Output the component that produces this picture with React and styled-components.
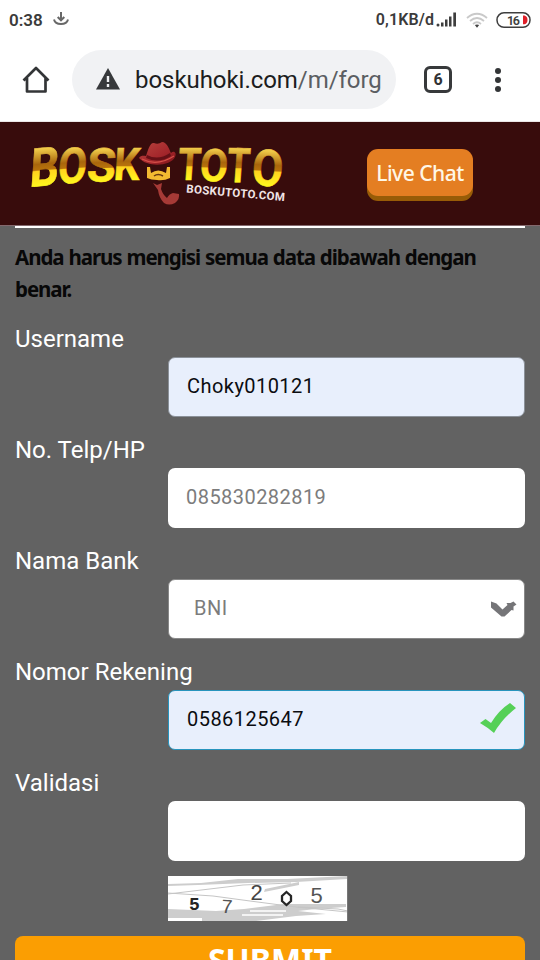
import React from 'react';
import styled, { createGlobalStyle } from 'styled-components';

const GlobalStyle = createGlobalStyle`
  * {
    box-sizing: border-box;
  }

  body {
    margin: 0;
    background: #626262;
    font-family: Roboto, "Liberation Sans", sans-serif;
  }
`;

const Screen = styled.div`
  width: 540px;
  height: 960px;
  display: flex;
  flex-direction: column;
  overflow: hidden;
  background: #626262;
`;

const StatusBar = styled.div`
  flex: none;
  height: 40px;
  padding: 0 9px;
  display: flex;
  align-items: center;
  justify-content: space-between;
  background: #fff;
  color: #3b3b3b;
  font-size: 17px;
  font-weight: 600;
`;

const StatusGroup = styled.div`
  display: flex;
  align-items: center;
  gap: ${(props) => props.gap};
`;

const StatusText = styled.span`
  font-size: ${(props) => props.size};
  letter-spacing: ${(props) => props.spacing || 0};
  line-height: 20px;
`;

const BrowserBar = styled.div`
  flex: none;
  height: 82px;
  padding: 10px 32px 13px 21px;
  display: flex;
  align-items: center;
  background: #fff;
  border-bottom: 1px solid #ece6e6;
`;

const AddressBar = styled.div`
  width: 324px;
  height: 59px;
  margin-left: 21px;
  padding: 2px 12px 0 23px;
  display: flex;
  align-items: center;
  gap: 14px;
  border-radius: 30px;
  background: #f1f2f4;

  svg {
    flex: none;
  }
`;

const Address = styled.span`
  color: #1c1d20;
  font-size: 24px;
  letter-spacing: ${(props) => props.spacing};
  white-space: nowrap;

  em {
    color: #5b5e62;
    font-style: normal;
  }
`;

const TabCount = styled.div`
  width: 28px;
  height: 27px;
  margin-left: 28px;
  display: flex;
  align-items: center;
  justify-content: center;
  border: 3px solid #37393b;
  border-radius: 6px;
  color: #303234;
  font-size: 16px;
  font-weight: 700;
`;

const MenuDots = styled.div`
  margin-left: 43px;
  padding-top: 1px;
  display: flex;
  flex-direction: column;
  gap: 3px;

  span {
    width: 6px;
    height: 6px;
    border-radius: 50%;
    background: #333537;
  }
`;

const SiteHeader = styled.header`
  flex: none;
  height: 103px;
  padding: 0 67px 0 20px;
  display: flex;
  align-items: flex-start;
  justify-content: space-between;
  background: #380c0c;
`;

const ChatButton = styled.button`
  width: 106px;
  height: 47px;
  margin-top: 27px;
  padding: 0;
  border: 0;
  border-radius: 11px;
  background: #e47e22;
  box-shadow: 0 5px 0 #985c07;
  color: #fff7e6;
  font-family: "Noto Sans", "Open Sans", sans-serif;
  font-size: 21px;
  font-weight: 500;
  letter-spacing: ${(props) => props.spacing};
`;

const Content = styled.main`
  flex: none;
  padding: 0 15px;
  border-top: 1px solid #84696e;
`;

const Divider = styled.div`
  height: 2px;
  background: #fff;
`;

const Intro = styled.p`
  margin: 13px 0 16px;
  color: #080808;
  font-family: "Noto Sans", "Open Sans", sans-serif;
  font-size: 20.5px;
  font-weight: 700;
  letter-spacing: -1.05px;
  word-spacing: 0.6px;
  line-height: 32px;
`;

const Row = styled.div`
  margin-bottom: 15px;
`;

const Label = styled.label`
  height: 36px;
  display: block;
  color: #fff;
  font-size: 24px;
  line-height: 36px;
`;

const Field = styled.div`
  height: 60px;
  margin-left: 153px;
  padding: ${(props) => props.pad || '0 8px 2px 18px'};
  display: flex;
  align-items: center;
  justify-content: space-between;
  border: ${(props) => (props.line ? `1px solid ${props.line}` : '0')};
  border-radius: 7px;
  background: ${(props) => (props.filled ? '#e8effc' : '#fff')};
  color: ${(props) => (props.filled ? '#0b0c10' : '#7c7c7c')};
  font-size: 20px;
  letter-spacing: 0.45px;
`;

const Captcha = styled.div`
  width: 180px;
  height: 45px;
  margin: 0 0 15px 153px;

  svg {
    display: block;
  }
`;

const Submit = styled.button`
  width: 100%;
  height: 50px;
  padding: 0 0 3px;
  display: block;
  border: 0;
  border-radius: 8px;
  background: #fb9e02;
  color: #fff;
  font-family: "Noto Sans", "Open Sans", sans-serif;
  font-size: 32px;
  font-weight: 700;
  line-height: 40px;
`;

// one entry per gold letter: left edge, width, baseline, cap height, bottom slope
const goldLetters = [
  ['B', 9, 29, 62, 38, -5],
  ['O', 37, 29, 59, 35, -4],
  ['S', 66, 29, 57, 33, -2],
  ['K', 93, 26, 55, 32, 0],
  ['T', 157, 23, 55, 32, 0],
  ['O', 179, 28, 56, 32, 1],
  ['T', 206, 23, 57, 34, 1],
  ['O', 231, 31, 60, 36, 3],
];

function Logo() {
  return (
    <svg width="280" height="103" viewBox="0 -3 280 103">
      <defs>
        <linearGradient id="gold" x1="0" y1="0" x2="0" y2="1">
          <stop offset="0.2" stopColor="#f0ca48" />
          <stop offset="0.44" stopColor="#a9660c" />
          <stop offset="0.53" stopColor="#b8730c" />
          <stop offset="0.55" stopColor="#ffd21e" />
          <stop offset="0.78" stopColor="#fff51e" />
        </linearGradient>
        <linearGradient id="felt" x1="0" y1="0" x2="1" y2="1">
          <stop offset="0" stopColor="#b9443e" />
          <stop offset="0.6" stopColor="#a3262b" />
          <stop offset="1" stopColor="#7d1319" />
        </linearGradient>
      </defs>
      {goldLetters.map(([char, x, width, base, cap, slope]) => (
        <g key={x} transform={`translate(${x} ${base}) skewY(${slope}) skewX(-4) scale(1 ${cap / 28.4})`}>
          <text
            x="0"
            y="0"
            fill="url(#gold)"
            stroke="url(#gold)"
            strokeWidth="0.5"
            fontFamily="Roboto, sans-serif"
            fontSize="40"
            fontWeight="700"
            textLength={width}
            lengthAdjust="spacingAndGlyphs"
          >
            {char}
          </text>
        </g>
      ))}
      <path d="M119 33C121 30 124 31 126 31C128 25 130 17 134 18Q138 20 142 17C147 17 149 24 151 28C154 25 157 28 155 32C151 41 128 43 119 33Z" fill="url(#felt)" />
      <path d="M127 30Q138 36 150 28L151 31Q139 39 126 33Z" fill="#651016" />
      <path d="M122 34Q137 42 154 31" fill="none" stroke="#d45049" strokeWidth="1.2" />
      <path d="M127 42L130 42L131 48Q138 43 146 48L147 42L150 42V53Q144 56 137 55Q131 55 127 53Z" fill="#f3ba31" />
      <path d="M134 51Q138 48 143 51" fill="none" stroke="#693810" strokeWidth="1.5" />
      <path d="M133 58L137 60L142 58L141 64Q143 70 147 73Q149 69 153 68L159 69Q160 74 155 78Q149 81 144 78Q139 73 138 65Z" fill="#a53a36" />
      <text
        x="166"
        y="67.5"
        transform="rotate(5 166 67.5)"
        fill="#f1e4e6"
        fontFamily="Roboto, sans-serif"
        fontSize="11.5"
        fontWeight="700"
        textLength="99"
      >
        BOSKUTOTO.COM
      </text>
    </svg>
  );
}

function DownloadIcon() {
  return (
    <svg width="16" height="16" viewBox="0 0 16 16" fill="none" stroke="#686868" strokeWidth="2">
      <path d="M8 0V8M4.7 5L8 8.3L11.3 5M1 7.5C2.5 13.5 13.5 13.5 15 7.5" />
    </svg>
  );
}

function SignalIcon() {
  return (
    <svg width="22" height="16" viewBox="0 0 22 16" fill="#3e3e3e">
      <circle cx="2" cy="13" r="1.5" />
      <path d="M5 10.5h2.5v4H5zM9 7.5h2.5v7H9zM13 4.5h2.5v10H13zM17.3 0.5h2.7v14h-2.7z" />
    </svg>
  );
}

function WifiIcon() {
  return (
    <svg width="22" height="17" viewBox="0 0 22 17" fill="none" stroke="#c9c9c9" strokeWidth="1.8">
      <path d="M1 6Q11 -2.5 21 6M4 9Q11 3 18 9M7 12Q11 8.5 15 12" />
      <path d="M8.8 13Q11 11.8 13.2 13L11 15.8Z" fill="#444" stroke="none" />
    </svg>
  );
}

function BatteryIcon() {
  return (
    <svg width="35" height="17" viewBox="0 0 35 17">
      <rect x="1" y="0.8" width="33" height="14.5" rx="7" fill="#fff" stroke="#3e3e3e" strokeWidth="1.5" />
      <path d="M27 3.5H28.5Q31.5 4.5 31.5 7.9T28.5 12.2H27Z" fill="#df2029" />
      <text x="11" y="12.5" fill="#3e3e3e" fontFamily="Roboto, sans-serif" fontSize="12.5" fontWeight="600" textLength="13">16</text>
    </svg>
  );
}

function HomeIcon() {
  return (
    <svg width="30" height="30" viewBox="0 0 30 30" fill="none" stroke="#333537" strokeWidth="2.7" strokeLinejoin="round">
      <path d="M2.5 16.5L15 4L27.5 16.5M6 14V27.5H24.5V14" />
    </svg>
  );
}

function WarningIcon() {
  return (
    <svg width="26" height="24" viewBox="0 0 26 24">
      <path d="M13 0L25 21.5H1Z" fill="#37393b" />
      <path d="M13 8V14M13 16V19" stroke="#f1f2f4" strokeWidth="2.4" />
    </svg>
  );
}

function ArrowIcon() {
  return (
    <svg width="27" height="19" viewBox="0 0 27 19">
      <path d="M1 2.5L6.5 4.5L12.5 10.5L17.5 6L16.5 4L20.5 4L23.5 2.5L26.5 5.5L23.5 7.5V11.5L21.5 11L14.5 17.5H11.5L1 8.5Z" fill="#757578" />
    </svg>
  );
}

function CheckIcon() {
  return (
    <svg width="38" height="32" viewBox="0 0 38 32">
      <path d="M1 20L6.5 16L12 20Q20 7 31 0L37 5Q23 16 15 30Q8 24 1 20Z" fill="#55d057" />
    </svg>
  );
}

function CaptchaPicture() {
  return (
    <svg width="180" height="45" viewBox="0 0 180 45">
      <rect width="180" height="45" fill="#fff" />
      <path d="M0 8L33 7L70 3H119L179 0V3L128 6L80 7L30 9L0 10ZM0 33L48 35L76 33L116 28L178 28V31L148 33L130 35L158 38L128 40L88 45H34V42H0ZM97 13L131 6V9L96 16Z" fill="#cdcdcd" />
      <path d="M0 17L45 20L82 25L128 31L180 36M0 18L75 9L123 7M130 31L170 33L180 35" fill="none" stroke="#c5c5c5" strokeWidth="1" />
      <path d="M82 35H118M74 39H115" stroke="#fff" strokeWidth="1.5" />
      <g fontFamily="Liberation Mono, monospace">
        <text x="21" y="34" fill="#242424" fontSize="18" fontWeight="700">5</text>
        <text x="53" y="37" fill="#555" fontSize="20" transform="rotate(3 58 30)">7</text>
        <text x="82" y="24" fill="#454545" fontSize="22">2</text>
        <text x="142" y="27" fill="#555" fontSize="22">5</text>
      </g>
      <path d="M118.5 16L123 20V25L118.5 29L114 25V20Z" fill="none" stroke="#262626" strokeWidth="2.3" />
      <path d="M179.5 0V45" stroke="#777" />
    </svg>
  );
}

function App() {
  return (
    <Screen>
      <GlobalStyle />
      <StatusBar>
        <StatusGroup gap="10px">
          <StatusText size="17px">0:38</StatusText>
          <DownloadIcon />
        </StatusGroup>
        <StatusGroup gap="8px">
          <StatusGroup gap="2px">
            <StatusText size="16px" spacing="0.1px">0,1KB/d</StatusText>
            <SignalIcon />
          </StatusGroup>
          <WifiIcon />
          <BatteryIcon />
        </StatusGroup>
      </StatusBar>
      <BrowserBar>
        <HomeIcon />
        <AddressBar>
          <WarningIcon />
          <Address spacing="-0.05px">
            boskuhoki.com
            <em>/m/forg</em>
          </Address>
        </AddressBar>
        <TabCount>6</TabCount>
        <MenuDots>
          <span />
          <span />
          <span />
        </MenuDots>
      </BrowserBar>
      <SiteHeader>
        <Logo />
        <ChatButton type="button" spacing="-0.5px">Live Chat</ChatButton>
      </SiteHeader>
      <Content>
        <Divider />
        <Intro>Anda harus mengisi semua data dibawah dengan benar.</Intro>
        <Row>
          <Label>Username</Label>
          <Field filled line="#8b9199">Choky010121</Field>
        </Row>
        <Row>
          <Label>No. Telp/HP</Label>
          <Field>085830282819</Field>
        </Row>
        <Row>
          <Label>Nama Bank</Label>
          <Field line="#888" pad="0 7px 2px 25px">
            BNI
            <ArrowIcon />
          </Field>
        </Row>
        <Row>
          <Label>Nomor Rekening</Label>
          <Field filled line="#2794bd" pad="0 7px 2px 18px">
            0586125647
            <CheckIcon />
          </Field>
        </Row>
        <Row>
          <Label>Validasi</Label>
          <Field />
        </Row>
        <Captcha>
          <CaptchaPicture />
        </Captcha>
        <Submit type="button">SUBMIT</Submit>
      </Content>
    </Screen>
  );
}

export default App;
